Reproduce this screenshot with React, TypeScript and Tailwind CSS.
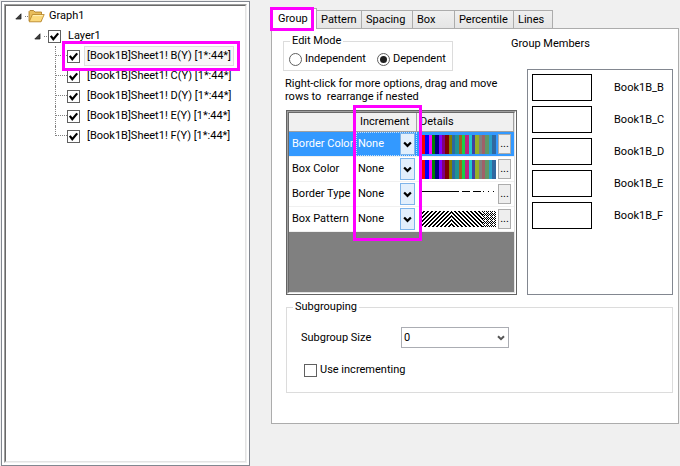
import { useState, type ReactNode } from "react";

const members = ["B", "C", "D", "E", "F"];

const swatches = [
  ["#000000", 1], ["#ff0000", 3], ["#0000ff", 4], ["#ff00ff", 3], ["#008000", 3],
  ["#000080", 4], ["#8000ff", 3], ["#800080", 3], ["#800000", 4], ["#808000", 3],
  ["#2c68a0", 3], ["#209494", 4], ["#a06020", 3], ["#18d048", 3], ["#c02080", 4],
  ["#20c8d0", 3], ["#4040a0", 3], ["#98b028", 4], ["#808080", 3], ["#a06068", 3],
  ["#609868", 4], ["#28a0c8", 3], ["#3068a0", 4],
] as const;

function Tick({ label }: { label: string }) {
  return (
    <span className="grid size-[13px] shrink-0">
      <input
        type="checkbox"
        defaultChecked
        aria-label={label}
        className="peer col-start-1 row-start-1 size-[13px] appearance-none border border-[#606060] bg-white"
      />
      <svg viewBox="0 0 13 13" className="pointer-events-none invisible col-start-1 row-start-1 size-[13px] peer-checked:visible">
        <path d="M2.8 5.8 5.3 9.2 10.2 3.4" fill="none" stroke="#000" strokeWidth="2.2" />
      </svg>
    </span>
  );
}

function Arrow() {
  return (
    <svg viewBox="0 0 7 7" className="size-[7px] shrink-0">
      <path d="M6 0.8V6H0.8Z" fill="#404040" stroke="#222" strokeWidth="0.8" />
    </svg>
  );
}

function Folder() {
  return (
    <svg viewBox="0 0 17 14" className="h-[14px] w-[17px] shrink-0">
      <path d="M1 12V2.5L2 1.5H5.5L7 3H13.5V12Z" fill="#e8bd5c" stroke="#a8761c" strokeWidth="0.8" />
      <path d="M1.2 12.8 4.4 5.5H16.2L13 12.8Z" fill="#fbd97c" stroke="#b58428" strokeWidth="0.8" />
      <path d="M4.9 6.6H14.8" stroke="#fff3c0" strokeWidth="0.9" />
    </svg>
  );
}

function Chevron({ className, color }: { className: string; color: string }) {
  return (
    <svg viewBox="0 0 8 8" className={className}>
      <path d="M1 2.2 4 5.2 7 2.2" fill="none" stroke={color} strokeWidth="2" />
    </svg>
  );
}

function Tree() {
  return (
    <ul>
      <li>
        <div className="flex h-5 items-center pl-[9px]">
          <Arrow />
          <span className="ml-[3px] w-[3px] border-b border-dotted border-[#808080]" />
          <Folder />
          <span className="ml-1">Graph1</span>
        </div>
        <ul>
          <li>
            <div className="flex h-5 items-center pl-7">
              <Arrow />
              <span className="ml-[3px] mr-px w-[3px] border-b border-dotted border-[#808080]" />
              <Tick label="Layer1" />
              <span className="ml-[7px]">Layer1</span>
            </div>
            <ul>
              {members.map((m, i) => (
                <li key={m} className="relative flex h-5 items-center pl-[49px]">
                  <span
                    className={`w-3 shrink-0 self-start border-l border-dotted border-[#808080] ${
                      i === members.length - 1 ? "h-[10px]" : "h-5"
                    }`}
                  >
                    <span className="block h-[10px] border-b border-dotted border-[#808080]" />
                  </span>
                  <Tick label={`Book1B ${m}`} />
                  <span
                    className={`ml-1 flex h-5 items-center whitespace-nowrap border px-[2px] ${
                      i === 0 ? "border-[#dedede] bg-[#f7f7f7]" : "border-transparent"
                    }`}
                  >
                    [Book1B]Sheet1! {m}(Y) [1*:44*]
                  </span>
                  {i === 0 && (
                    <span className="pointer-events-none absolute -top-[5px] left-14 z-10 h-[30px] w-[178px] border-[3px] border-[#ff00ff]" />
                  )}
                </li>
              ))}
            </ul>
          </li>
        </ul>
      </li>
    </ul>
  );
}

function Swatches() {
  return (
    <div className="flex h-[19px] w-[75px] shrink-0">
      {swatches.map(([color, width]) => (
        <span key={color} style={{ background: color, width }} />
      ))}
    </div>
  );
}

function LineSample() {
  return (
    <svg viewBox="0 0 75 19" className="h-[19px] w-[75px]" shapeRendering="crispEdges">
      <path d="M0 6.5H38M41 6.5H49M52 6.5H60M62 6.5H63M67 6.5H68M72 6.5H73" stroke="#000" />
    </svg>
  );
}

function PatternSample() {
  return (
    <svg viewBox="0 0 75 19" className="h-[19px] w-[75px]" shapeRendering="crispEdges">
      <defs>
        <pattern id="up" width="4" height="4" patternUnits="userSpaceOnUse">
          <path d="M0 3h2v1H0zM1 2h2v1H1zM2 1h2v1H2zM3 0h1v1H3zM0 0h1v1H0z" />
        </pattern>
        <pattern id="down" width="4" height="4" patternUnits="userSpaceOnUse">
          <path d="M0 0h2v1H0zM1 1h2v1H1zM2 2h2v1H2zM3 3h1v1H3zM0 3h1v1H0z" />
        </pattern>
        <pattern id="cross" width="4" height="4" patternUnits="userSpaceOnUse">
          <path d="M0 0h1v1H0zM1 1h1v1H1zM2 2h1v1H2zM3 3h1v1H3zM2 0h1v1H2zM1 3h1v1H1zM3 1h1v1H3z" />
        </pattern>
      </defs>
      <rect y="1" width="31" height="16" fill="url(#up)" />
      <rect x="31" y="1" width="31" height="16" fill="url(#down)" />
      <rect x="62" y="1" width="13" height="16" fill="url(#cross)" />
    </svg>
  );
}

const gridRows: { name: string; sample: ReactNode }[] = [
  { name: "Border Color", sample: <Swatches /> },
  { name: "Box Color", sample: <Swatches /> },
  { name: "Border Type", sample: <LineSample /> },
  { name: "Box Pattern", sample: <PatternSample /> },
];

function IncrementGrid() {
  return (
    <div className="relative ml-[3px] mt-[7px] flex h-[185px] border border-[#646464]">
      <div className="flex flex-1 border border-b-white border-l-[#a0a0a0] border-r-white border-t-[#a0a0a0]">
        <div className="flex-1 border border-b-[#e3e3e3] border-l-[#696969] border-r-[#e3e3e3] border-t-[#696969] bg-[#808080]">
          <table className="w-full table-fixed border-separate border-spacing-0 bg-white">
            <thead>
              <tr className="h-[19px] bg-[#f0f0f0] text-left">
                <th className="w-[67px] border-b border-r border-[#a0a0a0] p-0" aria-label="Property" />
                <th className="w-[61px] border-b border-r border-[#a0a0a0] p-0 pl-1 font-normal">Increment</th>
                <th className="border-b border-r border-[#a0a0a0] p-0 pl-[3px] font-normal">Details</th>
              </tr>
            </thead>
            <tbody>
              {gridRows.map(({ name, sample }, i) => (
                <tr key={name} className={`h-[25px] ${i === 0 ? "bg-[#3399ff] text-white" : ""}`}>
                  <th scope="row" className="whitespace-nowrap border-b border-[#f0f0f0] p-0 pl-[3px] text-left font-normal">
                    {name}
                  </th>
                  <td className="border-b border-[#f0f0f0] p-0">
                    <div className="grid h-6">
                      <select
                        aria-label={`${name} increment`}
                        className={`col-start-1 row-start-1 w-full appearance-none outline-none ${
                          i === 0 ? "border border-dotted border-white/70 pl-px" : "pl-[2px]"
                        }`}
                      >
                        <option>None</option>
                      </select>
                      <span className="pointer-events-none col-start-1 row-start-1 mr-[2px] flex h-[22px] w-[15px] items-center justify-center self-center justify-self-end border border-[#7eb4ea] bg-[#e2effc]">
                        <Chevron className="size-[9px]" color="#000" />
                      </span>
                    </div>
                  </td>
                  <td className="border-b border-[#f0f0f0] p-0">
                    <div className="flex items-center pl-1">
                      {sample}
                      <button
                        type="button"
                        aria-label={`${name} details`}
                        className="ml-[2px] flex h-5 w-[13px] items-center justify-center border border-[#acacac] bg-[#eeeeee] text-black"
                      >
                        ...
                      </button>
                    </div>
                  </td>
                </tr>
              ))}
            </tbody>
          </table>
        </div>
      </div>
      <span className="pointer-events-none absolute -top-[6px] left-[66px] h-[136px] w-[69px] border-[3px] border-[#ff00ff]" />
    </div>
  );
}

function Radio({ label, checked }: { label: string; checked?: boolean }) {
  return (
    <label className="flex items-center gap-[3px]">
      <input
        type="radio"
        name="edit-mode"
        defaultChecked={checked}
        className="size-[13px] shrink-0 appearance-none rounded-full border border-[#606060] bg-white bg-clip-content p-[2px] checked:bg-[#202020]"
      />
      {label}
    </label>
  );
}

const otherTabs = [
  ["Pattern", "w-[46px]"],
  ["Spacing", "w-[52px]"],
  ["Box", "w-[43px]"],
  ["Percentile", "w-[60px]"],
  ["Lines", "w-10"],
];

function Tabs() {
  return (
    <div role="tablist" className="flex items-end">
      <button
        type="button"
        role="tab"
        aria-selected="true"
        className="relative z-10 -mb-px h-[21px] w-[46px] border border-b-0 border-[#acacac] bg-white pl-[6px] text-left"
      >
        Group
        <span className="pointer-events-none absolute -left-[2px] -top-[2px] h-[24px] w-[44px] border-[3px] border-[#ff00ff]" />
      </button>
      {otherTabs.map(([name, width]) => (
        <button
          key={name}
          type="button"
          role="tab"
          aria-selected="false"
          className={`-ml-px h-[18px] border border-b-0 border-[#acacac] bg-linear-to-b from-[#f0f0f0] to-[#e5e5e5] pl-1 text-left ${width}`}
        >
          {name}
        </button>
      ))}
    </div>
  );
}

export default function App() {
  const [size, setSize] = useState("0");
  return (
    <div className="flex min-h-screen bg-[#f0f0f0] pl-px pr-px pt-px font-[Roboto,'Liberation_Sans',sans-serif] text-[11px] leading-4 text-black">
      <aside className="flex w-[249px] shrink-0 border border-[#828790] bg-white p-[2px]">
        <div className="min-w-0 flex-1 border border-b-[#f0f0f0] border-l-[#a0a0a0] border-r-[#f0f0f0] border-t-[#a0a0a0]">
          <div className="h-full border border-b-[#e3e3e3] border-l-[#696969] border-r-[#e3e3e3] border-t-[#696969]">
            <Tree />
          </div>
        </div>
      </aside>
      <main className="ml-[21px] min-w-0 flex-1 pt-[7px]">
        <Tabs />
        <div role="tabpanel" className="border border-[#acacac] bg-white pb-[30px] pl-[11px] pr-[5px]">
          <div className="flex gap-[10px]">
            <div className="min-w-0 flex-1 pt-1">
              <fieldset className="w-[170px] border border-[#dcdcdc] pb-[3px] pl-[5px]">
                <legend className="ml-[1px] px-[2px]">Edit Mode</legend>
                <div className="mt-[2px] grid grid-cols-[88px_auto]">
                  <Radio label="Independent" />
                  <Radio label="Dependent" checked />
                </div>
              </fieldset>
              <p className="ml-[2px] mt-[6px] whitespace-pre leading-[13px]">
                {"Right-click for more options, drag and move\nrows to  rearrange if nested"}
              </p>
              <IncrementGrid />
            </div>
            <div className="flex w-[146px] shrink-0 flex-col pt-[7px]">
              <h2 className="-ml-4">Group Members</h2>
              <ul className="mt-[17px] flex flex-1 flex-col gap-[5px] border border-[#828790] px-1 pt-1">
                {members.map((m) => (
                  <li key={m} className="flex items-center">
                    <span className="h-[27px] w-[60px] shrink-0 border border-black" />
                    <span className="ml-[22px]">Book1B_{m}</span>
                  </li>
                ))}
              </ul>
            </div>
          </div>
          <fieldset className="ml-[3px] mt-1 border border-[#dcdcdc] pb-[14px]">
            <legend className="ml-[6px] px-[2px]">Subgrouping</legend>
            <div className="mt-3 flex items-center pl-[14px]">
              <label htmlFor="size" className="w-[100px]">Subgroup Size</label>
              <div className="grid w-[108px] items-center">
                <select
                  id="size"
                  value={size}
                  onChange={(e) => setSize(e.target.value)}
                  className="col-start-1 row-start-1 h-[21px] appearance-none border border-[#abadb3] bg-white pl-[2px]"
                >
                  <option>0</option>
                  <option>2</option>
                </select>
                <Chevron className="pointer-events-none col-start-1 row-start-1 mr-1 size-2 justify-self-end" color="#555" />
              </div>
            </div>
            <label className="mt-[14px] flex items-center gap-[3px] pl-[17px]">
              <input type="checkbox" className="size-[13px] appearance-none border border-[#606060] bg-white" />
              Use incrementing
            </label>
          </fieldset>
        </div>
      </main>
    </div>
  );
}
